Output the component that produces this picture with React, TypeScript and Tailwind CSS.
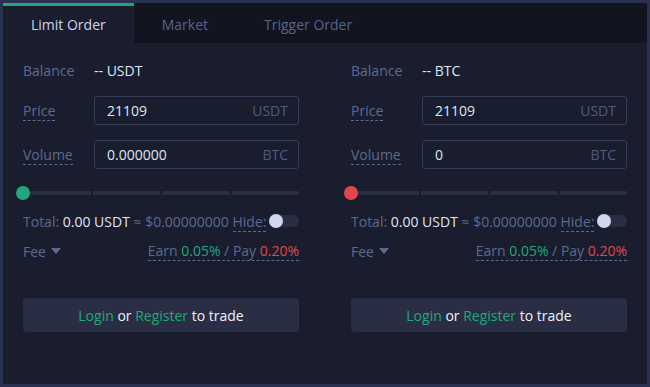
import React from 'react';

type Side = {
  asset: string;
  volume: string;
  dot: string;
};

const sides: Side[] = [
  { asset: 'USDT', volume: '0.000000', dot: 'bg-[#21a87a]' },
  { asset: 'BTC', volume: '0', dot: 'bg-[#e5464d]' },
];

const OrderForm: React.FC<{ side: Side }> = ({ side }) => {
  return (
    <div className="w-[276px] text-[14px]">
      <div className="flex items-center h-5">
        <span className="w-[71px] text-[#5b6a92]">Balance</span>
        <span className="text-[#dfe5f5]">-- {side.asset}</span>
      </div>

      <div className="flex items-center mt-4">
        <span className="w-[71px]">
          <span className="text-[#5b6a92] border-b border-dashed border-[#5b6a92] leading-[18px] inline-block">Price</span>
        </span>
        <div className="flex-1 h-[29px] border border-[#353b55] rounded-[3px] flex items-center justify-between pl-3 pr-[10px]">
          <span className="text-[#dfe5f5]">21109</span>
          <span className="text-[#4f5c80]">USDT</span>
        </div>
      </div>

      <div className="flex items-center mt-[15px]">
        <span className="w-[71px]">
          <span className="text-[#5b6a92] border-b border-dashed border-[#5b6a92] leading-[18px] inline-block">Volume</span>
        </span>
        <div className="flex-1 h-[29px] border border-[#353b55] rounded-[3px] flex items-center justify-between pl-3 pr-[10px]">
          <span className="text-[#dfe5f5]">{side.volume}</span>
          <span className="text-[#4f5c80]">BTC</span>
        </div>
      </div>

      <div className="relative h-[14px] mt-[17px] flex items-center">
        <div className="flex w-full gap-[2px]">
          <div className="flex-1 h-[4px] bg-[#2a2e43] rounded-l-full" />
          <div className="flex-1 h-[4px] bg-[#2a2e43]" />
          <div className="flex-1 h-[4px] bg-[#2a2e43]" />
          <div className="flex-1 h-[4px] bg-[#2a2e43] rounded-r-full" />
        </div>
        <div className={`absolute left-[-7px] top-0 w-[14px] h-[14px] rounded-full ${side.dot}`} />
      </div>

      <div className="flex items-center justify-between h-5 mt-[11px]">
        <span className="text-[#5b6a92] whitespace-nowrap">
          Total: <span className="text-[#dfe5f5]">0.00 USDT</span> ≈ $0.00000000{' '}
          <span className="border-b border-dashed border-[#5b6a92] leading-[18px] inline-block">Hide:</span>
        </span>
        <div className="relative w-[30px] h-[12px] rounded-full bg-[#2a2e43]">
          <div className="absolute left-0 top-[-1px] w-[14px] h-[14px] rounded-full bg-[#d0d6ef]" />
        </div>
      </div>

      <div className="flex items-center justify-between h-5 mt-[10px]">
        <span className="text-[#5b6a92] flex items-center gap-[5px]">
          Fee
          <svg width="10" height="6" viewBox="0 0 10 6">
            <path d="M0 0 L10 0 L5 6 Z" fill="#5b6a92" />
          </svg>
        </span>
        <span className="text-[#5b6a92] border-b border-dashed border-[#5b6a92] leading-[18px] inline-block">
          Earn <span className="text-[#21a87a]">0.05%</span> / Pay <span className="text-[#e5464d]">0.20%</span>
        </span>
      </div>

      <div className="mt-[37px] h-[34px] rounded-[4px] bg-[#2a2e45] flex items-center justify-center text-[14px] text-[#eef1fa] whitespace-pre">
        <span className="text-[#21a87a]">Login</span>
        <span> or </span>
        <span className="text-[#21a87a]">Register</span>
        <span> to trade</span>
      </div>
    </div>
  );
};

const App: React.FC = () => {
  const tabs = ['Limit Order', 'Market', 'Trigger Order'];
  return (
    <div
      className="w-[650px] h-[387px] bg-[#283250] pt-[3px] pl-[3px] pr-[3px] pb-[3px]"
      style={{ fontFamily: '"Open Sans", sans-serif' }}
    >
      <div className="h-full bg-[#1a1d2d] flex flex-col">
        <div className="flex h-[40px] bg-[#12141f]">
          {tabs.map((t, i) => (
            <div
              key={t}
              className={
                i === 0
                  ? 'px-7 flex items-center text-[14px] text-[#cbd4ef] bg-[#1a1d2d] border-t-[3px] border-[#21a87a]'
                  : 'px-7 flex items-center text-[14px] text-[#56648e] border-t-[3px] border-transparent'
              }
            >
              {t}
            </div>
          ))}
        </div>
        <div className="flex justify-between px-5 pt-[17px]">
          {sides.map(s => (
            <OrderForm key={s.asset} side={s} />
          ))}
        </div>
      </div>
    </div>
  );
};

export default App;
